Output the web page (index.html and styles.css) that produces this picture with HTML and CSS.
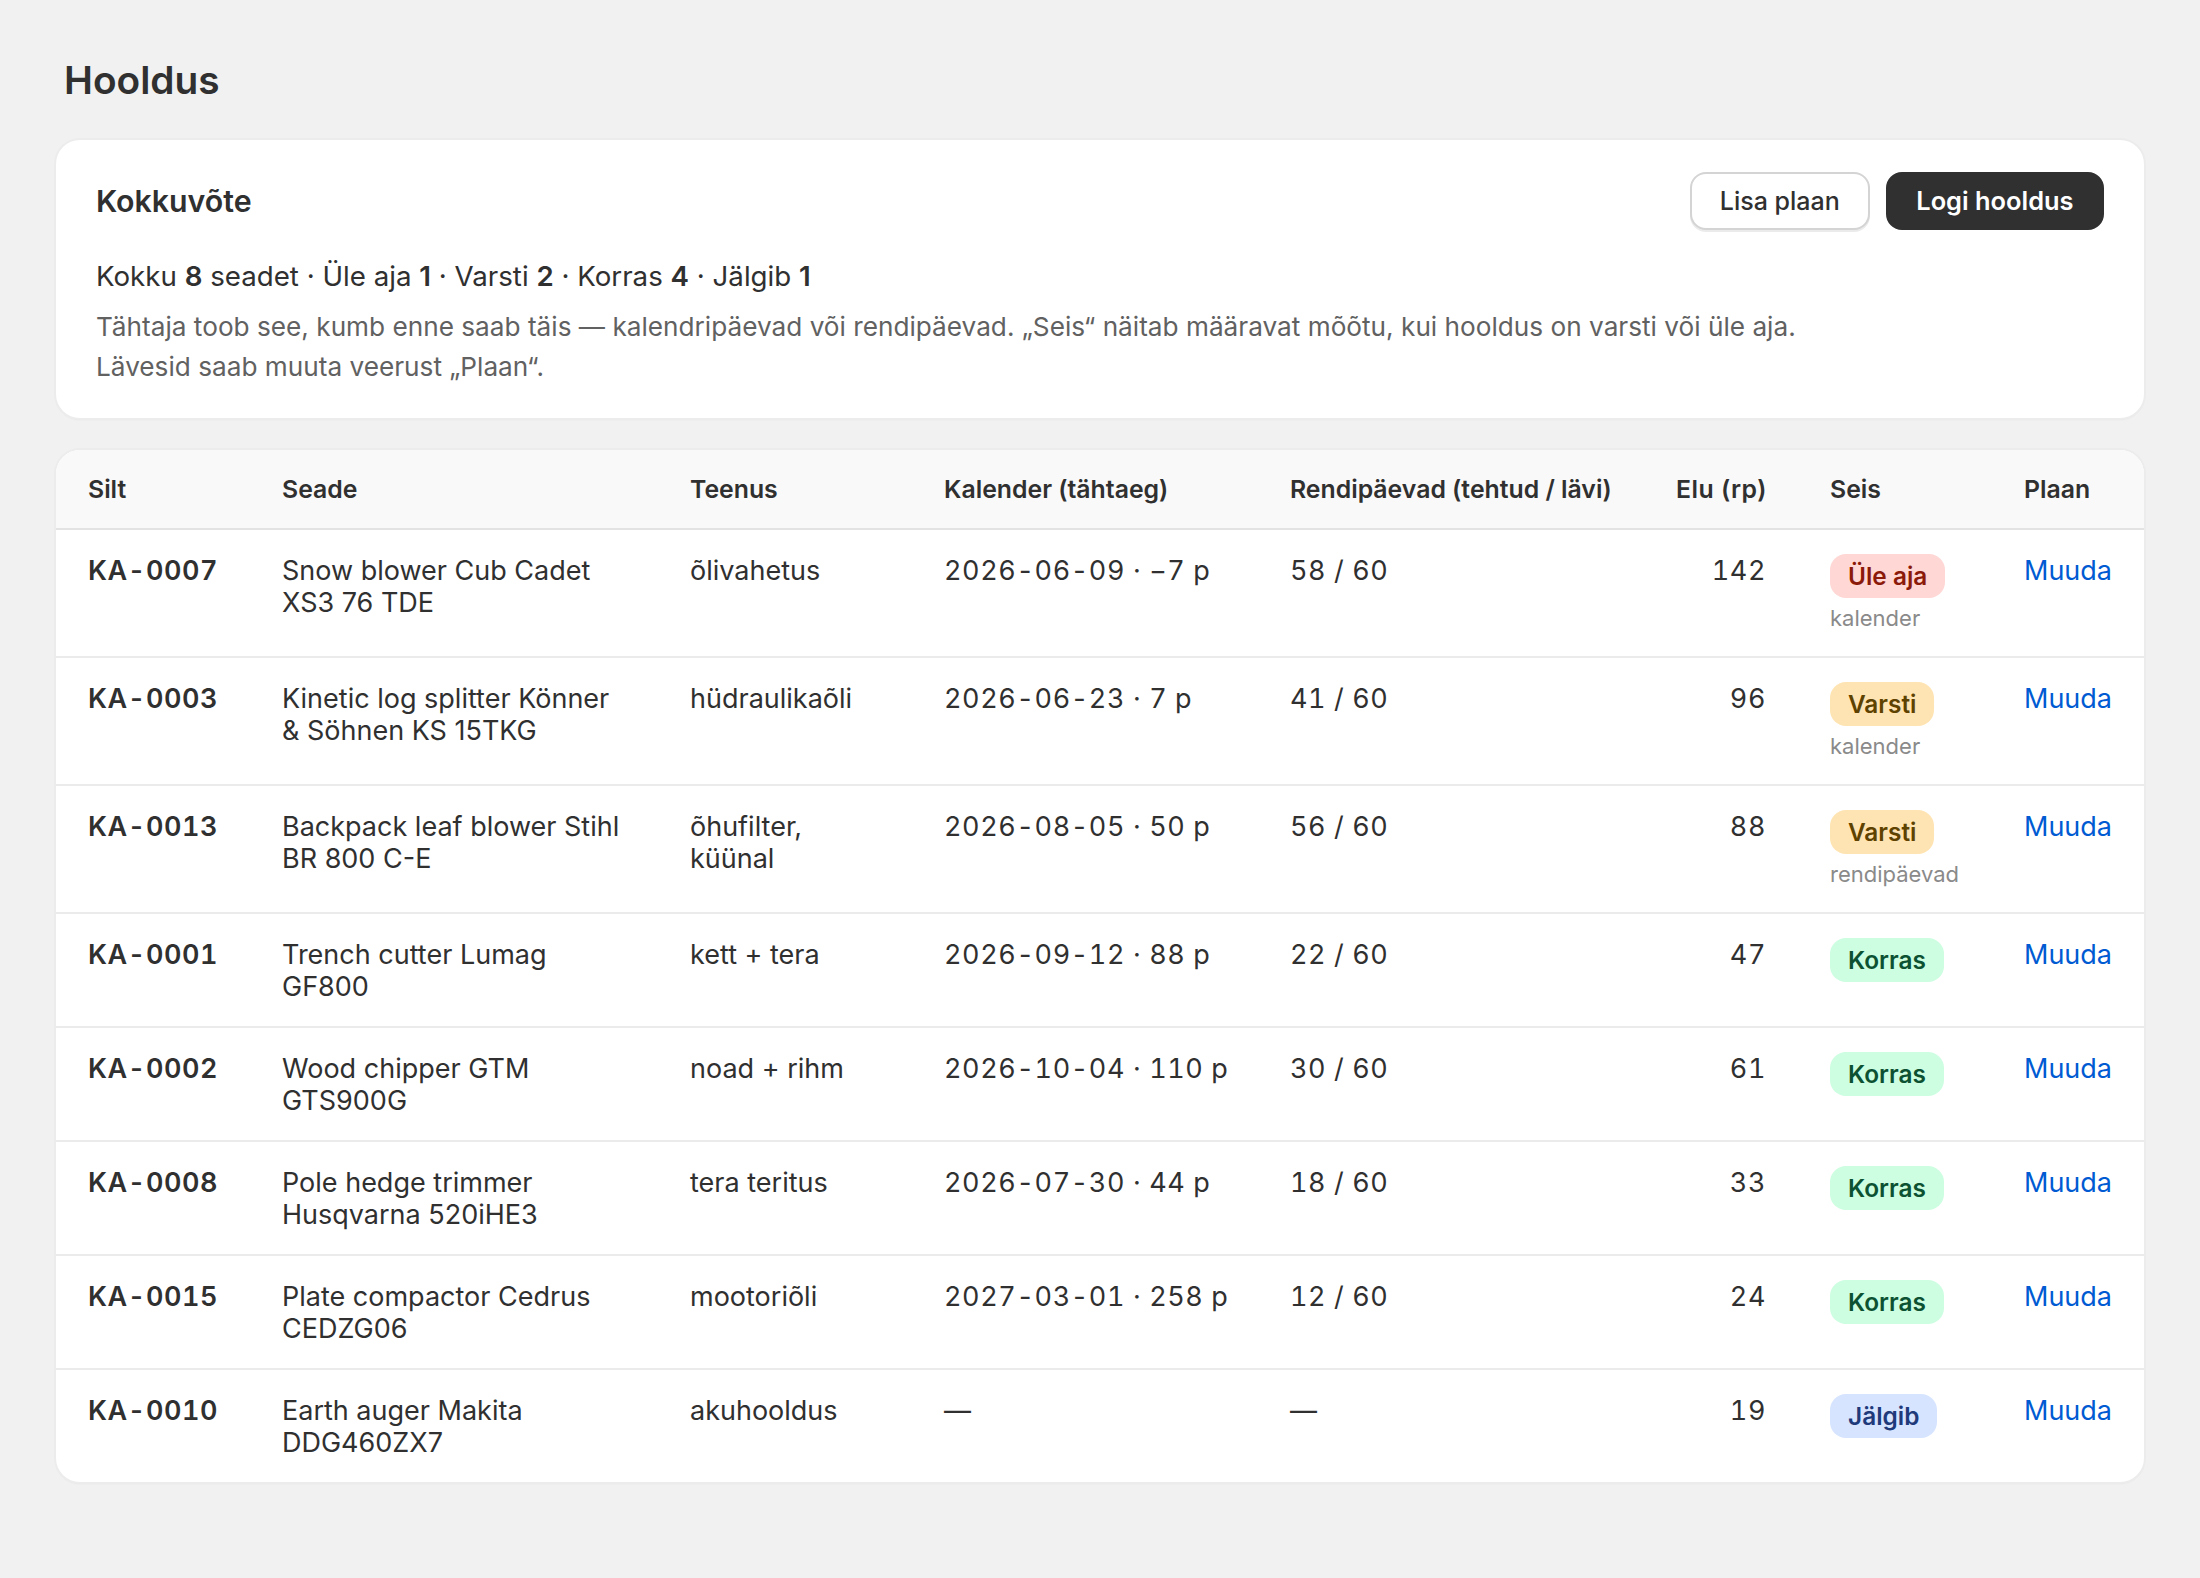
FILE: index.html
```html
<!DOCTYPE html>
<html lang="et">
<head>
    <meta charset="UTF-8">
    <title>Hooldus</title>
    <link rel="stylesheet" href="styles.css">
</head>
<body>
    <main class="page">
        <h1 class="page-title">Hooldus</h1>

        <!-- Kokkuvõte -->
        <section class="card summary">
            <div class="summary-head">
                <h2 class="summary-title">Kokkuvõte</h2>
                <div class="actions">
                    <a class="btn" href="#">Lisa plaan</a>
                    <a class="btn btn-dark" href="#">Logi hooldus</a>
                </div>
            </div>
            <p class="totals">Kokku <b>8</b> seadet · Üle aja <b>1</b> · Varsti <b>2</b> · Korras <b>4</b> · Jälgib <b>1</b></p>
            <p class="note">Tähtaja toob see, kumb enne saab täis — kalendripäevad või rendipäevad. „Seis“ näitab määravat mõõtu, kui hooldus on varsti või üle aja.<br>Lävesid saab muuta veerust „Plaan“.</p>
        </section>

        <!-- Tabel -->
        <section class="card table-card">
            <table class="plans">
                <thead>
                    <tr>
                        <th class="col-tag">Silt</th>
                        <th class="col-device">Seade</th>
                        <th class="col-service">Teenus</th>
                        <th class="col-calendar">Kalender (tähtaeg)</th>
                        <th class="col-rent">Rendipäevad (tehtud / lävi)</th>
                        <th class="col-life num">Elu (rp)</th>
                        <th class="col-state">Seis</th>
                        <th class="col-plan">Plaan</th>
                    </tr>
                </thead>
                <tbody>
                    <tr>
                        <td class="tag">KA-0007</td>
                        <td>Snow blower Cub Cadet XS3 76 TDE</td>
                        <td>õlivahetus</td>
                        <td class="tnum">2026-06-09 · −7 p</td>
                        <td class="tnum">58 / 60</td>
                        <td class="tnum num">142</td>
                        <td><span class="badge badge-red">Üle aja</span><span class="why">kalender</span></td>
                        <td><a class="edit" href="#">Muuda</a></td>
                    </tr>
                    <tr>
                        <td class="tag">KA-0003</td>
                        <td>Kinetic log splitter Könner &amp; Söhnen KS 15TKG</td>
                        <td>hüdraulikaõli</td>
                        <td class="tnum">2026-06-23 · 7 p</td>
                        <td class="tnum">41 / 60</td>
                        <td class="tnum num">96</td>
                        <td><span class="badge badge-yellow">Varsti</span><span class="why">kalender</span></td>
                        <td><a class="edit" href="#">Muuda</a></td>
                    </tr>
                    <tr>
                        <td class="tag">KA-0013</td>
                        <td>Backpack leaf blower Stihl BR 800 C-E</td>
                        <td>õhufilter, küünal</td>
                        <td class="tnum">2026-08-05 · 50 p</td>
                        <td class="tnum">56 / 60</td>
                        <td class="tnum num">88</td>
                        <td><span class="badge badge-yellow">Varsti</span><span class="why">rendipäevad</span></td>
                        <td><a class="edit" href="#">Muuda</a></td>
                    </tr>
                    <tr>
                        <td class="tag">KA-0001</td>
                        <td>Trench cutter Lumag GF800</td>
                        <td>kett + tera</td>
                        <td class="tnum">2026-09-12 · 88 p</td>
                        <td class="tnum">22 / 60</td>
                        <td class="tnum num">47</td>
                        <td><span class="badge badge-green">Korras</span></td>
                        <td><a class="edit" href="#">Muuda</a></td>
                    </tr>
                    <tr>
                        <td class="tag">KA-0002</td>
                        <td>Wood chipper GTM GTS900G</td>
                        <td>noad + rihm</td>
                        <td class="tnum">2026-10-04 · 110 p</td>
                        <td class="tnum">30 / 60</td>
                        <td class="tnum num">61</td>
                        <td><span class="badge badge-green">Korras</span></td>
                        <td><a class="edit" href="#">Muuda</a></td>
                    </tr>
                    <tr>
                        <td class="tag">KA-0008</td>
                        <td>Pole hedge trimmer Husqvarna 520iHE3</td>
                        <td>tera teritus</td>
                        <td class="tnum">2026-07-30 · 44 p</td>
                        <td class="tnum">18 / 60</td>
                        <td class="tnum num">33</td>
                        <td><span class="badge badge-green">Korras</span></td>
                        <td><a class="edit" href="#">Muuda</a></td>
                    </tr>
                    <tr>
                        <td class="tag">KA-0015</td>
                        <td>Plate compactor Cedrus CEDZG06</td>
                        <td>mootoriõli</td>
                        <td class="tnum">2027-03-01 · 258 p</td>
                        <td class="tnum">12 / 60</td>
                        <td class="tnum num">24</td>
                        <td><span class="badge badge-green">Korras</span></td>
                        <td><a class="edit" href="#">Muuda</a></td>
                    </tr>
                    <tr>
                        <td class="tag">KA-0010</td>
                        <td>Earth auger Makita DDG460ZX7</td>
                        <td>akuhooldus</td>
                        <td class="tnum">—</td>
                        <td class="tnum">—</td>
                        <td class="tnum num">19</td>
                        <td><span class="badge badge-blue">Jälgib</span></td>
                        <td><a class="edit" href="#">Muuda</a></td>
                    </tr>
                </tbody>
            </table>
        </section>
    </main>
</body>
</html>
```

FILE: styles.css
```css
* {
    margin: 0;
    padding: 0;
    box-sizing: border-box;
}

body {
    font-family: Inter, "Liberation Sans", sans-serif;
    font-size: 27px;
    line-height: 32px;
    color: #303030;
    background: #f1f1f1;
}

.page {
    padding: 56px;
}

.page-title {
    font-size: 38.8px;
    line-height: 48px;
    font-weight: 600;
    padding-left: 8px;
    margin-bottom: 36px;
}

.card {
    background: #fff;
    border-radius: 24px;
    box-shadow: 0 0 0 2px #ececec, 0 2px 2px rgba(0, 0, 0, 0.06);
}

/* Kokkuvõte */
.summary {
    padding: 32px 40px 31px;
    margin-bottom: 32px;
}

.summary-head {
    display: flex;
    justify-content: space-between;
    align-items: center;
    margin-bottom: 26px;
}

.summary-title {
    font-size: 30.3px;
    line-height: 40px;
    font-weight: 600;
}

.actions {
    display: flex;
    gap: 16px;
}

.btn {
    display: block;
    height: 58px;
    line-height: 54px;
    padding: 0 28px;
    font-size: 25px;
    font-weight: 500;
    color: #303030;
    text-decoration: none;
    background: #fff;
    border: 2px solid #d4d4d4;
    border-radius: 16px;
    box-shadow: 0 2px 0 #ebebeb;
}

.btn-dark {
    padding: 0 28.5px;
    font-size: 25.4px;
    font-weight: 600;
    color: #fff;
    background: #303030;
    border-color: #303030;
    box-shadow: none;
}

.totals {
    font-size: 27.7px;
    line-height: 40px;
    margin-bottom: 11px;
}

.totals b {
    font-weight: 600;
}

.note {
    font-size: 26.2px;
    line-height: 40px;
    color: #616161;
}

/* Tabel */
.table-card {
    overflow: hidden;
}

.plans {
    width: 100%;
    table-layout: fixed;
    border-collapse: collapse;
}

.col-tag { width: 194px; }
.col-device { width: 408px; }
.col-service { width: 254px; }
.col-calendar { width: 346px; }
.col-rent { width: 386px; }
.col-life { width: 154px; }
.col-state { width: 194px; }
.col-plan { width: 152px; }

.plans th {
    height: 79px;
    padding: 0 32px;
    font-size: 24.8px;
    font-weight: 600;
    text-align: left;
    white-space: nowrap;
    background: #f9f9f9;
    border-bottom: 2px solid #e3e3e3;
}

.plans td {
    padding: 25px 32px 23px;
    vertical-align: top;
    border-bottom: 2px solid #ebebeb;
}

.plans tbody tr:last-child td {
    border-bottom: none;
}

.plans th.num,
.plans td.num {
    text-align: right;
}

.plans th.num {
    letter-spacing: 0.5px;
}

.tnum {
    font-variant-numeric: tabular-nums;
    letter-spacing: 0.6px;
    white-space: nowrap;
}

.tag {
    font-weight: 600;
    font-variant-numeric: tabular-nums;
    letter-spacing: 0.6px;
    white-space: nowrap;
}

.badge {
    display: inline-block;
    height: 44px;
    line-height: 44px;
    margin-top: -1px;
    padding: 0 18px;
    font-size: 24.4px;
    font-weight: 600;
    border-radius: 16px;
    vertical-align: top;
}

.badge-red { background: #ffd7d5; color: #8b1a0a; }
.badge-yellow { background: #ffe4b3; color: #5e4200; }
.badge-green { background: #cdfee1; color: #0c5132; }
.badge-blue { background: #d6e4ff; color: #1f3a7a; }

.why {
    display: block;
    margin: 6px 0 1px;
    font-size: 22px;
    line-height: 28px;
    color: #8a8a8a;
}

.edit {
    color: #005bd3;
    text-decoration: none;
}
```
